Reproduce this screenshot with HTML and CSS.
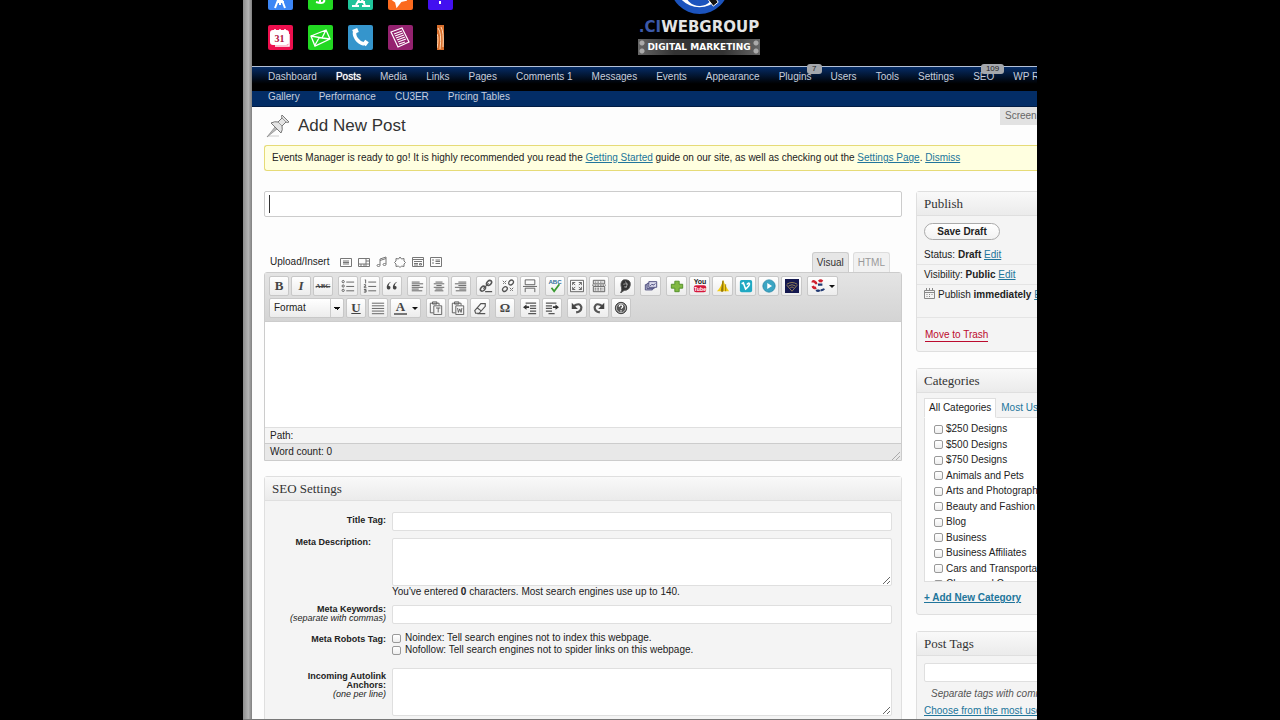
FILE: index.html
```html
<!DOCTYPE html>
<html lang="en">
<head>
  <meta charset="UTF-8">
  <meta name="viewport" content="width=device-width, initial-scale=1.0">
  <title>Add New Post</title>
  <link rel="stylesheet" href="styles.css">
</head>
<body>
<div class="page">

  <!-- Brand bar -->
  <header class="brand">
    <div class="tiles">
      <a href="#" class="tile blue" aria-label="Analytics"><svg viewBox="0 0 25 25"><path d="M12 2v9M12 10l-5 13M12 10l5 13M12 12v8M9 17h7" /></svg></a>
      <a href="#" class="tile green" aria-label="Billing"><svg viewBox="0 0 25 25"><path d="M17 7c-9-4-9 5-4 6s5 7-5 4M12 3v16" /></svg></a>
      <a href="#" class="tile teal" aria-label="Design"><svg viewBox="0 0 25 25"><path d="M8 5l9 15M17 5L8 20M4 21h7M14 21h8M9 17h8" /></svg></a>
      <a href="#" class="tile orange" aria-label="Announcements"><svg viewBox="0 0 25 25"><path fill="#fff" d="M4 14l5-2 2-7 4 4 6-4-3 10-5 1-4 5-1-4z" /></svg></a>
      <a href="#" class="tile violet" aria-label="Alerts"><svg viewBox="0 0 25 25"><path d="M12 4v9M12 16v3" /></svg></a>
      <a href="#" class="tile red" aria-label="Calendar"><svg viewBox="0 0 25 25"><rect x="3" y="6" width="17" height="13" rx="2" fill="#fff" /><path d="M7 4v4M12 4v4M17 4v4M21 9v12H7" stroke-width="1.5" /><text x="11.500" y="17" class="tile-num">31</text></svg></a>
      <a href="#" class="tile green" aria-label="Mail"><svg viewBox="0 0 25 25"><path d="M3 11l15-6 4 9-15 7zM3 11l11 2 4-8M7 20l4-7M22 14l-8-1" stroke-width="1.3" /></svg></a>
      <a href="#" class="tile sky" aria-label="Phone"><svg viewBox="0 0 25 25"><path d="M7 6c-2 5 3 12 9 13" stroke-width="3.500" /><path d="M5 7l5-2M16 20l3-4" stroke-width="4.500" /></svg></a>
      <a href="#" class="tile plum" aria-label="Notes"><svg viewBox="0 0 25 25"><path d="M3 7l11-4 7 14-11 5zM6 9l8-3M7 11l8-3M8 13l8-3M9 15l8-3M10 17l8-3M11 19l6-2" stroke-width="1.200" /></svg></a>
      <a href="#" class="tile slim" aria-label="Feed"><svg viewBox="0 0 7 25"><path d="M1 3q4 5 2 21M4 2q3 5 2 20M0 9q2 4 0 14" stroke="#ffd9b5" stroke-width="1" /></svg></a>
    </div>
    <div class="logo">
      <svg class="logo-mark" viewBox="0 0 62 62" aria-hidden="true">
        <circle cx="31" cy="31" r="30" fill="#1b53bd" />
        <circle cx="31" cy="28" r="26" fill="#fff" />
        <path d="M20 28a14 14 0 0 0 22 20v-22z" fill="#1b53bd" />
        <path d="M26 26h16v20q-12 3-16-20z" fill="#fff" />
        <path d="M38 44l6-4 6 9-5 4z" fill="#111" stroke="#fff" />
      </svg>
      <div class="logo-name"><span>.CI</span>WEBGROUP</div>
      <div class="logo-tag">DIGITAL MARKETING</div>
    </div>
  </header>

  <!-- Admin menu -->
  <nav class="menu">
    <a href="#">Dashboard</a>
    <a href="#" class="current">Posts</a>
    <a href="#">Media</a>
    <a href="#">Links</a>
    <a href="#">Pages</a>
    <a href="#">Comments 1</a>
    <a href="#">Messages</a>
    <a href="#">Events</a>
    <a href="#">Appearance</a>
    <a href="#">Plugins<span class="badge">7</span></a>
    <a href="#">Users</a>
    <a href="#">Tools</a>
    <a href="#">Settings</a>
    <a href="#">SEO<span class="badge">109</span></a>
    <a href="#">WP Robots</a>
  </nav>
  <nav class="menu submenu">
    <a href="#">Gallery</a>
    <a href="#">Performance</a>
    <a href="#">CU3ER</a>
    <a href="#">Pricing Tables</a>
  </nav>

  <main class="content">
    <div class="heading">
      <svg class="pin" viewBox="0 0 24 24" aria-hidden="true">
        <path d="M2 22h11" stroke="#ccc" />
        <path d="M1 23l8-10 2 2z" fill="#bbb" stroke="#888" stroke-width=".7" />
        <path d="M5 9q4-2 7-1l4-4q-1-2 0-3l7 7q-2 1-3 0l-4 4q1 4-1 7z" fill="#e4e4e4" stroke="#777" />
        <path d="M12 8l4 4M16 4l4 4" stroke="#999" fill="none" />
      </svg>
      <h1>Add New Post</h1>
      <button class="screen-options">Screen Options</button>
    </div>

    <p class="notice">Events Manager is ready to go! It is highly recommended you read the <a href="#">Getting Started</a> guide on our site, as well as checking out the <a href="#">Settings Page</a>. <a href="#">Dismiss</a></p>

    <div class="columns">
      <div class="main-col">
        <input class="post-title" type="text" aria-label="Post title">

        <div class="media-bar">
          <span>Upload/Insert</span>
          <div class="media-icons">
            <a href="#" aria-label="Image"><svg viewBox="0 0 12 12"><path d="M.5 2.500h11v8H.5zM3 5h6M3 6.500h6M3 8h6" /></svg></a>
            <a href="#" aria-label="Video"><svg viewBox="0 0 12 12"><path d="M.5 2.500h11v8H.5zM.5 8h11M3 8v2M6 8v2M8 2.500v8M8 5h3" /></svg></a>
            <a href="#" aria-label="Audio"><svg viewBox="0 0 12 12"><path d="M4 9V3l6-2v7M4 4.500l6-2" /><ellipse cx="2.500" cy="9.500" rx="1.500" ry="1" /><ellipse cx="8.500" cy="8.500" rx="1.500" ry="1" /></svg></a>
            <a href="#" aria-label="Media"><svg viewBox="0 0 12 12"><path d="M6 1l1.500 2 2.500-.5v2.500l1.500 1.500L10 8v2.500L7.500 10 6 11.500 4.500 10 2 10.500V8L.5 6.500 2 5V2.500l2.500.5z" /></svg></a>
            <a href="#" aria-label="Table"><svg viewBox="0 0 12 12"><path d="M.5 1.500h11v9H.5zM.5 3.500h11M2 5.500h8M2 7.500h4M2 9h4M7.500 7.500h2V9h-2z" /></svg></a>
            <a href="#" aria-label="Form"><svg viewBox="0 0 12 12"><path d="M.5 1.500h11v9H.5zM2 4h2M2 7h2M5.500 4H10M5.500 5.500H10M5.500 7.500H10" /></svg></a>
          </div>
          <div class="mode-tabs">
            <button class="active">Visual</button>
            <button>HTML</button>
          </div>
        </div>

        <!-- Editor -->
        <div class="editor">
          <div class="toolbar">
            <div class="tool-row">
              <div class="tools">
                <button class="serif" aria-label="Bold"><b>B</b></button>
                <button class="serif" aria-label="Italic"><b><i>I</i></b></button>
                <button class="serif tiny" aria-label="Strikethrough"><s>ABC</s></button>
              </div>
              <div class="tools">
                <button aria-label="Bulleted list"><svg viewBox="0 0 16 16"><path d="M6 3.500h9M6 8.500h9M6 13.500h9" /><circle cx="2.500" cy="3" r="1.300" /><circle cx="2.500" cy="8" r="1.300" /><circle cx="2.500" cy="13" r="1.300" /></svg></button>
                <button aria-label="Numbered list"><svg viewBox="0 0 16 16"><path d="M6 3.500h9M6 8.500h9M6 13.500h9M2 1h1v4M1 6.500h2v2H1.500v1.500H4M1 12h2.500v3H1M1.500 13.500h2" /></svg></button>
                <button aria-label="Quote"><svg viewBox="0 0 16 16"><path d="M7 3C1 5 1 12 4 12s3-5 0-4q0-3 3-5zM14 3C8 5 8 12 11 12s3-5 0-4q0-3 3-5z" fill="#444" stroke="none" /></svg></button>
              </div>
              <div class="tools">
                <button aria-label="Align left"><svg viewBox="0 0 16 16"><path d="M2 3.500h9M2 5.500h13M2 7.500h9M2 9.500h13M2 11.500h8M2 13.500h12" /></svg></button>
                <button aria-label="Align center"><svg viewBox="0 0 16 16"><path d="M4 3.500h8M2 5.500h12M5 7.500h6M2 9.500h12M4 11.500h8M3 13.500h10" /></svg></button>
                <button aria-label="Align right"><svg viewBox="0 0 16 16"><path d="M5 3.500h9M1 5.500h13M5 7.500h9M1 9.500h13M6 11.500h8M2 13.500h12" /></svg></button>
              </div>
              <div class="tools">
                <button aria-label="Insert link"><svg viewBox="0 0 16 16"><path d="M5 11l6-6M7 14.500h8" stroke-width="1.500" /><ellipse cx="4.500" cy="11" rx="3.300" ry="2.300" transform="rotate(-45 4.500 11)" stroke-width="1.800" /><ellipse cx="11.500" cy="4.500" rx="3.300" ry="2.300" transform="rotate(-45 11.500 4.500)" stroke-width="1.800" /></svg></button>
                <button aria-label="Remove link"><svg viewBox="0 0 16 16"><ellipse cx="4.500" cy="11.500" rx="3" ry="2.300" transform="rotate(-45 4.500 11.500)" stroke-width="1.500" /><ellipse cx="11.500" cy="4" rx="3" ry="2.300" transform="rotate(-45 11.500 4)" stroke-width="1.500" /><path d="M2 2l4 4M6 2L2 6M10 10l4 4M14 10l-4 4" stroke-dasharray="2 1" /></svg></button>
                <button aria-label="More tag"><svg viewBox="0 0 16 16"><path d="M2.500 1v5.500h11V1zM2.500 15v-4.500h11V15M0 8.500h16" /></svg></button>
              </div>
              <div class="tools">
                <button aria-label="Spell check"><svg viewBox="0 0 16 16"><text x="8" y="5.500" class="abc">ABC</text><path d="M4 10l3 4 6-8" stroke="#3a9a31" stroke-width="2" /></svg></button>
                <button aria-label="Fullscreen"><svg viewBox="0 0 16 16"><path d="M.5 1.500h15v13H.5zM3 7V4h3M10 4h3v3M13 9v3h-3M6 12H3V9M3 4l3 3M13 4l-3 3M3 12l3-3M13 12l-3-3" /></svg></button>
                <button aria-label="Toolbar toggle"><svg viewBox="0 0 16 16"><path d="M1.500 1.500h13v4h-13zM1.500 8.500h13v6h-13z" /><path d="M3 3.500h10M3 10.500h10M3 12.500h10M0 7h16" stroke-dasharray="2 1" /></svg></button>
              </div>
              <div class="tools wide">
                <button aria-label="Portrait"><svg viewBox="0 0 16 16"><path d="M6 1q9-1 8 6-1 6-7 6l-4 3q2-4 1-6-2-6 2-9z" fill="#333" /><path d="M8 3q4 2 1 7M6 6q3-1 5 0M7 9h3" stroke="#aaa" /></svg></button>
              </div>
              <div class="tools wide">
                <button aria-label="Gallery"><svg viewBox="0 0 16 16"><path d="M1.500 6.500h8v6h-8z" fill="#b9bdd4" stroke="#447" /><path d="M3.500 5h8v6h-8z" fill="#ccd" stroke="#447" /><path d="M5.500 3h9v6.500h-9zM7 8l2-2 2 1 2-2" fill="#dde" stroke="#447" /></svg></button>
              </div>
              <div class="tools wide">
                <button aria-label="Add"><svg viewBox="0 0 16 16"><path d="M5.500 2.500h5v3.500h4v4.500h-4v4h-5v-4h-4V6h4z" fill="#82b944" stroke="#4b8a24" /></svg></button>
                <button aria-label="YouTube"><svg viewBox="0 0 16 16"><text x="8" y="6" class="you">You</text><rect x="1" y="7" width="14" height="8" rx="2.500" fill="#d5173b" stroke="none" /><text x="8" y="13.500" class="tube">Tube</text></svg></button>
                <button aria-label="Warning"><svg viewBox="0 0 16 16"><path d="M8 1q3 8 7 13H1Q6 9 8 1z" fill="#f5cf18" stroke="none" /><path d="M8 2v12H6zM11 6v8" stroke="#94770b" fill="#94770b" /></svg></button>
                <button aria-label="Vimeo"><svg viewBox="0 0 16 16"><rect x="1" y="1" width="14" height="14" rx="2" fill="#21a9c3" stroke="none" /><path d="M3 5.500l2-1 2.500 7Q12 8 12 5.500q-1-2-3 1" stroke="#fff" stroke-width="1.800" /></svg></button>
                <button aria-label="Player"><svg viewBox="0 0 16 16"><circle cx="8" cy="8" r="7" fill="#3ba5c3" stroke="#2888a8" /><path d="M6 4.500l5.500 3.500L6 11.500z" fill="#fff" stroke="none" /></svg></button>
                <button aria-label="Wireless"><svg viewBox="0 0 16 16"><path d="M0 0h16v16H0z" fill="#14184f" stroke="none" /><path d="M2 6q6-4 12 0M4 8q4-3 8 0M6 10q2-2 4 0M2 7l6 7 6-7" stroke="#a18c59" /></svg></button>
              </div>
              <div class="tools">
                <button class="split" aria-label="Shortcodes"><svg viewBox="0 0 16 16"><path d="M2 4q0-2 2-1t2 3M9 3q2-2 4 0M2 8q1 3 4 2" stroke="#cf1f2d" stroke-width="3" /><path d="M8 6.500h5M6 12.500q2 2 4 0M11 13q3 0 4-2" stroke="#223a73" stroke-width="2.500" /></svg><span class="caret"></span></button>
              </div>
            </div>
            <div class="tool-row">
              <div class="tools">
                <select class="format" aria-label="Format"><option>Format</option></select>
                <button class="serif" aria-label="Underline"><b><u>U</u></b></button>
                <button aria-label="Justify"><svg viewBox="0 0 16 16"><path d="M1 2.500h14M1 5.500h14M1 8.500h14M1 11.500h14M1 14.500h14" /></svg></button>
                <button class="split serif" aria-label="Text color"><b class="ink">A</b><span class="caret"></span></button>
              </div>
              <div class="tools">
                <button aria-label="Paste as text"><svg viewBox="0 0 16 16"><path d="M5 13.500H1.500v-11h10V5M4 3.500V1h5v2.500zM5.500 5.500h9v10h-9zM8 8h5M10.500 8v5" /></svg></button>
                <button aria-label="Paste from Word"><svg viewBox="0 0 16 16"><path d="M5 13.500H1.500v-11h10V5M4 3.500V1h5v2.500zM5.500 5.500h9v10h-9zM7.500 8l1 5 1.500-4 1.500 4 1-5" /></svg></button>
                <button aria-label="Clear formatting"><svg viewBox="0 0 16 16"><path d="M2 11l7-8h5v3l-7 8H3zM5 8l4 3M5 14.500h9" stroke-width="1.300" /></svg></button>
              </div>
              <div class="tools">
                <button class="serif" aria-label="Special character"><b>Ω</b></button>
              </div>
              <div class="tools">
                <button aria-label="Outdent"><svg viewBox="0 0 16 16"><path d="M3 2.500h12M8 5.500h7M8 8.500h7M8 11.500h7M6 14.500h9" stroke-width="1.500" /><path d="M0 7l4-3v2h3v2H4v2z" fill="#333" stroke="none" /></svg></button>
                <button aria-label="Indent"><svg viewBox="0 0 16 16"><path d="M1 2.500h12M1 5.500h7M1 8.500h7M1 11.500h7M4 14.500h7" stroke-width="1.500" /><path d="M16 7l-4-3v2H9v2h3v2z" fill="#333" stroke="none" /></svg></button>
              </div>
              <div class="tools">
                <button aria-label="Undo"><svg viewBox="0 0 16 16"><path d="M4 6q7-5 9 1 0 5-6 6" stroke-width="2.500" /><path d="M2 2v7h7z" fill="#444" stroke="none" /></svg></button>
                <button aria-label="Redo"><svg viewBox="0 0 16 16"><path d="M12 6Q5 1 3 7q0 5 6 6" stroke-width="2.500" /><path d="M14 2v7H7z" fill="#444" stroke="none" /></svg></button>
                <button aria-label="Help"><svg viewBox="0 0 16 16"><circle cx="8" cy="8" r="6.500" fill="#555" stroke="#333" /><circle cx="8" cy="8" r="5.300" stroke="#ddd" stroke-width=".8" /><path d="M6 6.500q0-2 2-2t2 1.700q0 1-2 2.300M8 10.500v1.500" stroke="#fff" stroke-width="1.500" /></svg></button>
              </div>
            </div>
          </div>
          <textarea class="editor-body" aria-label="Post content"></textarea>
          <div class="path">Path:</div>
          <div class="word-count">Word count: 0
            <svg class="grip" viewBox="0 0 8 8" aria-hidden="true"><path d="M0 8l8-8M4 8l4-4" /></svg>
          </div>
        </div>

        <section class="box seo">
          <h2>SEO Settings</h2>
          <div class="seo-form">
            <label for="seo-title">Title Tag:</label>
            <input id="seo-title" type="text">

            <label for="seo-desc" class="inset">Meta Description:</label>
            <div>
              <textarea id="seo-desc"></textarea>
              <p>You've entered <b>0</b> characters. Most search engines use up to 140.</p>
            </div>

            <label for="seo-keys" class="stacked">Meta Keywords:<br><em>(separate with commas)</em></label>
            <input id="seo-keys" type="text">

            <span class="label">Meta Robots Tag:</span>
            <div class="robots">
              <label><input type="checkbox">Noindex: Tell search engines not to index this webpage.</label>
              <label><input type="checkbox">Nofollow: Tell search engines not to spider links on this webpage.</label>
            </div>

            <label for="seo-anchors">Incoming Autolink<br>Anchors:<br><em>(one per line)</em></label>
            <textarea id="seo-anchors"></textarea>
          </div>
        </section>
      </div>

      <aside class="side-col">
        <section class="box">
          <h2>Publish</h2>
          <div class="save"><button>Save Draft</button></div>
          <p class="row">Status: <b>Draft</b> <a href="#">Edit</a></p>
          <p class="row">Visibility: <b>Public</b> <a href="#">Edit</a></p>
          <p class="row schedule">
            <svg viewBox="0 0 11 11" aria-hidden="true"><path d="M.5 2.500h10v8H.5zM.5 4.500h10M2.500 0v3M5.500 0v3M8.500 0v3M2.500 6.500h1M5 6.500h1M7.500 6.500h1M2.500 8.500h1M5 8.500h1" /></svg>
            <span>Publish <b>immediately</b> <a href="#">Edit</a></span>
          </p>
          <div class="trash"><a href="#">Move to Trash</a></div>
        </section>

        <section class="box categories">
          <h2>Categories</h2>
          <div class="cat-tabs">
            <button class="active">All Categories</button>
            <button>Most Used</button>
          </div>
          <div class="cat-panel">
            <ul>
              <li><label><input type="checkbox">$250 Designs</label></li>
              <li><label><input type="checkbox">$500 Designs</label></li>
              <li><label><input type="checkbox">$750 Designs</label></li>
              <li><label><input type="checkbox">Animals and Pets</label></li>
              <li><label><input type="checkbox">Arts and Photography</label></li>
              <li><label><input type="checkbox">Beauty and Fashion</label></li>
              <li><label><input type="checkbox">Blog</label></li>
              <li><label><input type="checkbox">Business</label></li>
              <li><label><input type="checkbox">Business Affiliates</label></li>
              <li><label><input type="checkbox">Cars and Transportation</label></li>
              <li><label><input type="checkbox">Chess and Games</label></li>
            </ul>
          </div>
          <a href="#" class="add-cat">+ Add New Category</a>
        </section>

        <section class="box tags">
          <h2>Post Tags</h2>
          <input type="text" aria-label="Post tags">
          <p><em>Separate tags with commas</em></p>
          <a href="#">Choose from the most used tags</a>
        </section>
      </aside>
    </div>
  </main>
</div>
</body>
</html>
```
FILE: styles.css
```css
*, *::before, *::after {
  box-sizing: border-box;
}
body {
  margin: 0;
  padding: 0 243px;
  height: 100vh;
  overflow: hidden;
  background: #000;
  color: #222;
  font-family: "Liberation Sans", Helvetica, Arial, sans-serif;
  font-size: 10px;
  line-height: 12px;
}
h1, h2, p, ul {
  margin: 0;
  padding: 0;
  font-weight: normal;
}
a {
  color: #21759b;
}
button, input, select, textarea {
  margin: 0;
  font: inherit;
  color: inherit;
}
svg {
  display: block;
  fill: none;
}
.page {
  height: 100%;
  padding-left: 9px;
  overflow: hidden;
  background: linear-gradient(90deg, #8c8c8c, #b4b4b4 60%, #808080) 0 0 / 9px 100% no-repeat, #fdfdfd;
  border-bottom: 1px solid #777;
}

/* brand bar */
.brand {
  display: flex;
  height: 66px;
  padding-left: 16px;
  background: #000;
}
.tiles {
  display: grid;
  grid-template-columns: repeat(5, 25px);
  grid-auto-rows: 25px;
  gap: 15px;
  margin-top: -15px;
}
.tile {
  border-radius: 2px;
}
.tile svg {
  width: 100%;
  height: 25px;
  stroke: #fff;
  stroke-width: 2;
}
.blue { background: #3c86f5; }
.green { background: #22d822; }
.teal { background: #1fc49a; }
.orange { background: #fb6a1e; }
.violet { background: #4310f0; }
.red { background: #ee0f4e; }
.sky { background: #3595cc; }
.plum { background: #94226f; }
.slim {
  width: 7px;
  margin-left: 9px;
  background: #d9702e;
  border-radius: 0;
}
.tile .tile-num {
  fill: #b01040;
  stroke: none;
  font: bold 10px "Liberation Serif", serif;
  text-anchor: middle;
}
.logo {
  display: flex;
  flex-direction: column;
  align-items: center;
  width: 124px;
  margin: -46px 0 0 184px;
  color: #e4e4e4;
  font-family: "DejaVu Sans", sans-serif;
  font-weight: bold;
}
.logo-mark {
  flex: none;
  width: 61px;
  height: 61px;
}
.logo-name {
  padding-top: 5px;
  font-size: 15px;
  line-height: 14px;
}
.logo-name span {
  color: #3c59a8;
}
.logo-tag {
  display: flex;
  justify-content: center;
  width: 122px;
  margin-top: 5px;
  background:
    radial-gradient(circle at 4px 4px, #aaa 2px, transparent 3px),
    radial-gradient(circle at 4px 12px, #aaa 2px, transparent 3px),
    radial-gradient(circle at 118px 4px, #aaa 2px, transparent 3px),
    radial-gradient(circle at 118px 12px, #aaa 2px, transparent 3px),
    linear-gradient(90deg, #666, #333 30%, #333 70%, #666);
  color: #fff;
  font-size: 9px;
  line-height: 16px;
  white-space: nowrap;
}

/* admin menu */
.menu {
  display: flex;
  gap: 19px;
  height: 25px;
  padding-left: 16px;
  border-top: 1px solid #b4c1d6;
  background: linear-gradient(#052c66, #000 70%);
  line-height: 20px;
  white-space: nowrap;
}
.menu a {
  position: relative;
  color: #c6cede;
  text-decoration: none;
}
.menu .current {
  color: #fff;
  text-shadow: 0 0 1px #fff;
}
.badge {
  position: absolute;
  top: -3px;
  right: -10px;
  padding: 0 5px;
  border-radius: 3px;
  background: #a4a7ac;
  color: #222;
  font-size: 8px;
  line-height: 10px;
}
.submenu {
  height: 16px;
  border-top: 0;
  border-bottom: 1px solid #021c44;
  background: #032d66;
  line-height: 12px;
}

/* heading and notice */
.content {
  padding-left: 12px;
}
.heading {
  display: flex;
  align-items: center;
  gap: 8px;
  height: 38px;
  padding-left: 2px;
}
.pin {
  width: 24px;
  height: 24px;
}
h1 {
  flex: 1;
  color: #333;
  font-size: 17px;
  line-height: 20px;
}
.screen-options {
  align-self: flex-start;
  width: 37px;
  height: 18px;
  padding: 0 0 0 5px;
  overflow: hidden;
  border: 0;
  background: #e2e2e2;
  color: #666;
  text-align: left;
  white-space: nowrap;
}
.notice {
  padding: 6px 7px;
  border: 1px solid #e6db77;
  border-right: 0;
  border-radius: 3px 0 0 3px;
  background: #ffffe0;
  white-space: nowrap;
}

.columns {
  display: grid;
  grid-template-columns: minmax(0, 1fr) 121px;
  gap: 14px;
  padding-top: 20px;
}
.side-col {
  overflow: hidden;
  white-space: nowrap;
}
input[type="text"], textarea {
  display: block;
  width: 100%;
  padding: 0 4px;
  border: 1px solid #dfdfdf;
  border-radius: 2px;
  background: #fff;
}
input[type="checkbox"] {
  appearance: none;
  flex: none;
  width: 9px;
  height: 9px;
  border: 1px solid #999;
  border-radius: 2px;
  background: linear-gradient(#fff, #eee);
}
input.post-title {
  height: 26px;
  border-color: #ccc;
  background: linear-gradient(#333, #333) 4px center / 1px 18px no-repeat, #fff;
}

/* media bar */
.media-bar {
  display: flex;
  align-items: center;
  gap: 11px;
  height: 20px;
  margin-top: 35px;
  padding: 0 12px 0 6px;
}
.media-icons {
  display: flex;
  flex: 1;
  gap: 6px;
}
.media-icons svg {
  width: 12px;
  height: 12px;
  stroke: #777;
}
.mode-tabs {
  display: flex;
  align-self: flex-end;
  gap: 4px;
}
.mode-tabs button {
  height: 20px;
  padding: 0 4px;
  border: 1px solid #ddd;
  border-bottom: 0;
  border-radius: 3px 3px 0 0;
  background: #f1f1f1;
  color: #999;
}
.mode-tabs .active {
  border-color: #ccc;
  background: #e6e6e6;
  color: #333;
}

/* editor */
.editor {
  border: 1px solid #ccc;
  border-radius: 3px 3px 0 0;
}
.toolbar {
  display: flex;
  flex-direction: column;
  gap: 2px;
  padding: 3px 4px;
  border-bottom: 1px solid #ccc;
  background: linear-gradient(#e4e4e4, #d4d4d4);
}
.tool-row {
  display: flex;
  gap: 5px;
}
.tools {
  display: flex;
  gap: 2px;
}
.tools button {
  display: flex;
  align-items: center;
  justify-content: center;
  width: 20px;
  height: 20px;
  padding: 0;
  border: 1px solid #c8c8c8;
  border-radius: 2px;
  background: linear-gradient(#fff, #ececec);
  color: #444;
}
.tools.wide button {
  width: 21px;
}
.tools svg {
  width: 14px;
  height: 14px;
  stroke: #555;
}
.tools .serif {
  font-family: "Liberation Serif", serif;
  font-size: 13px;
}
.tools .tiny {
  font-size: 7px;
  font-weight: bold;
}
.tools .split {
  justify-content: space-between;
  width: 31px;
  padding: 0 2px 0 3px;
}
.ink {
  width: 13px;
  border-bottom: 2px solid #777;
  line-height: 12px;
}
.caret {
  border: 3px solid transparent;
  border-top-color: #111;
  border-bottom: 0;
}
.tools text {
  stroke: none;
  text-anchor: middle;
  font-family: "Liberation Sans", sans-serif;
  font-weight: bold;
}
.tools .abc {
  fill: #2f6f9a;
  font-size: 7px;
}
.tools .you {
  fill: #222;
  font-size: 8px;
}
.tools .tube {
  fill: #fff;
  font-size: 6px;
}
.format {
  appearance: none;
  width: 75px;
  height: 20px;
  padding: 0 4px;
  border: 1px solid #c8c8c8;
  border-radius: 2px;
  background:
    linear-gradient(45deg, transparent 50%, #111 50%) 64px 8px / 3px 3px no-repeat,
    linear-gradient(-45deg, transparent 50%, #111 50%) 67px 8px / 3px 3px no-repeat,
    linear-gradient(#ccc, #ccc) 60px 0 / 1px 100% no-repeat,
    linear-gradient(#fff, #ececec);
  background:
    linear-gradient(-135deg, #111 50%, transparent 50%) 64px 8px / 3px 3px no-repeat,
    linear-gradient(135deg, #111 50%, transparent 50%) 67px 8px / 3px 3px no-repeat,
    linear-gradient(#ccc, #ccc) 60px 0 / 1px 100% no-repeat,
    linear-gradient(#fff, #ececec);
}
textarea.editor-body {
  height: 105px;
  border: 0;
  resize: none;
}
.path, .word-count {
  padding: 0 5px;
  border-top: 1px solid #dfdfdf;
  background: #f5f5f5;
  line-height: 15px;
}
.word-count {
  display: flex;
  align-items: flex-end;
  justify-content: space-between;
  padding-right: 1px;
  border-color: #ccc;
  background: #e8e8e8;
  line-height: 16px;
}
.grip {
  width: 8px;
  height: 8px;
  stroke: #aaa;
}

/* boxes */
.box {
  margin-bottom: 16px;
  border: 1px solid #dfdfdf;
  border-radius: 3px;
  background: #f4f4f4;
}
.box h2 {
  padding: 0 7px;
  border-bottom: 1px solid #dfdfdf;
  background: linear-gradient(#f9f9f9, #ebebeb);
  color: #333;
  font-family: Georgia, "Liberation Serif", serif;
  font-size: 13px;
  line-height: 23px;
}
.side-col .box {
  width: 240px;
}
.seo {
  margin-top: 15px;
}
.seo-form {
  display: grid;
  grid-template-columns: 114px minmax(0, 1fr);
  gap: 7px 6px;
  padding: 11px 9px 20px 7px;
}
.seo-form > label, .label {
  padding-top: 4px;
  font-size: 9px;
  font-weight: bold;
  line-height: 9px;
  text-align: right;
}
.seo-form > .inset {
  padding: 0 15px 0 0;
}
.seo-form > .stacked {
  padding: 0;
}
.seo-form em {
  font-weight: normal;
}
.seo-form input[type="text"] {
  height: 19px;
}
.seo-form textarea {
  height: 48px;
}
.robots {
  padding: 1px 0 5px;
}
.robots label {
  display: flex;
  align-items: center;
  gap: 4px;
}

/* publish */
.save {
  padding: 7px 7px 5px;
}
.save button {
  display: block;
  width: 76px;
  height: 17px;
  padding: 0;
  border: 1px solid #aaa;
  border-radius: 9px;
  background: linear-gradient(#fff, #f2f2f2);
  font-weight: bold;
}
.row {
  padding: 3px 7px;
  border-bottom: 1px solid #e4e4e4;
  line-height: 13px;
}
.schedule {
  display: flex;
  gap: 3px;
  height: 33px;
}
.schedule svg {
  width: 11px;
  height: 11px;
  stroke: #888;
}
.trash {
  padding: 11px 8px 9px;
}
.trash a {
  display: inline-block;
  border-bottom: 1px solid #bc0b2e;
  color: #bc0b2e;
  text-decoration: none;
}

/* categories */
.cat-tabs {
  display: flex;
  padding: 5px 7px 0;
}
.cat-tabs button {
  height: 20px;
  padding: 0 4px;
  border: 1px solid transparent;
  border-bottom-color: #dfdfdf;
  background: none;
  color: #21759b;
}
.cat-tabs .active {
  border-color: #dfdfdf #dfdfdf #fff;
  background: #fff;
  color: #222;
}
.cat-panel {
  height: 164px;
  margin: 0 7px;
  padding: 5px 9px 0;
  overflow: hidden;
  border: 1px solid #dfdfdf;
  border-top: 0;
  background: #fff;
}
.cat-panel ul {
  display: grid;
  grid-auto-rows: 1fr;
  height: 171px;
  list-style: none;
}
.cat-panel label {
  display: flex;
  align-items: center;
  gap: 3px;
}
.add-cat {
  display: block;
  padding: 10px 7px;
  font-weight: bold;
}

/* tags */
.tags {
  padding-bottom: 20px;
}
.tags input[type="text"] {
  width: 200px;
  height: 19px;
  margin: 7px 7px 6px;
}
.tags p {
  padding: 0 14px 5px;
  color: #555;
}
.tags > a {
  padding-left: 7px;
}
```
